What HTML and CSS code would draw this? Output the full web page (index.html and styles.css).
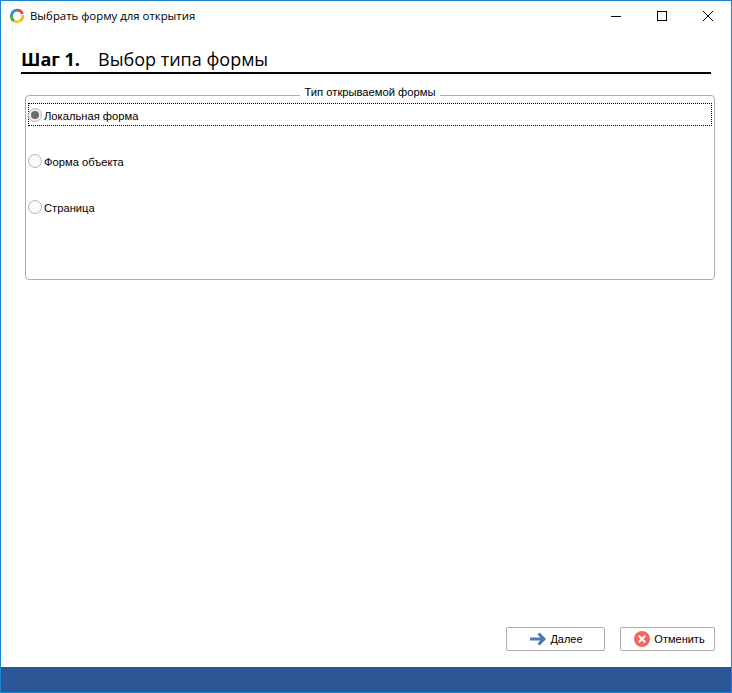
FILE: index.html
```html
<!DOCTYPE html>
<html lang="ru">
<head>
<meta charset="utf-8">
<title>Выбрать форму для открытия</title>
<link rel="stylesheet" href="styles.css">
</head>
<body>
<div class="window">
  <header class="titlebar">
    <svg class="app-icon" width="16" height="16" viewBox="0 0 16 16" fill="none" stroke-width="2.800">
      <path d="M8 2.200A5.800 5.800 0 0 1 13.500 6" stroke="#e5412f"/>
      <path d="M13.700 7.200A5.800 5.800 0 0 1 10.500 13.200" stroke="#f6b81d"/>
      <path d="M10 13.400A5.800 5.800 0 0 1 4.600 12.700" stroke="#f3c52c"/>
      <path d="M5 12.900A5.800 5.800 0 0 1 2.300 7.500" stroke="#4cae4f"/>
      <path d="M2.300 8A5.800 5.800 0 0 1 8 2.200" stroke="#2c8fd6"/>
    </svg>
    <span class="title">Выбрать форму для открытия</span>
    <div class="controls">
      <svg class="ctl" width="46" height="31" viewBox="0 0 46 31"><path d="M18 15.500h10" stroke="#000" fill="none"/></svg>
      <svg class="ctl" width="46" height="31" viewBox="0 0 46 31"><rect x="18.500" y="10.500" width="9" height="9" stroke="#000" fill="none"/></svg>
      <svg class="ctl" width="46" height="31" viewBox="0 0 46 31"><path d="M18 10l10 10M28 10L18 20" stroke="#000" fill="none"/></svg>
    </div>
  </header>
  <div class="step">
    <span class="step-num">Шаг 1.</span>
    <span class="step-name">Выбор типа формы</span>
  </div>
  <fieldset class="group">
    <legend class="legend">Тип открываемой формы</legend>
    <div class="option focused">
      <span class="radio checked"></span>
      <span class="label">Локальная форма</span>
    </div>
    <div class="option">
      <span class="radio"></span>
      <span class="label">Форма объекта</span>
    </div>
    <div class="option">
      <span class="radio"></span>
      <span class="label">Страница</span>
    </div>
  </fieldset>
  <div class="spacer"></div>
  <div class="actions">
    <button class="btn next" type="button">
      <svg width="18" height="16" viewBox="0 0 18 16" fill="none"><path d="M1 8h14M9.500 2.500L15 8l-5.500 5.500" stroke="#4a7ab5" stroke-width="3"/></svg>
      <span>Далее</span>
    </button>
    <button class="btn cancel" type="button">
      <svg width="16" height="16" viewBox="0 0 16 16"><circle cx="8" cy="8" r="8" fill="#f0695c"/><path d="M4.800 4.800l6.400 6.400M11.200 4.800l-6.400 6.400" stroke="#fff" stroke-width="2" fill="none"/></svg>
      <span>Отменить</span>
    </button>
  </div>
  <footer class="footer"></footer>
</div>
</body>
</html>
```
FILE: styles.css
```css
html, body {
  margin: 0;
  padding: 0;
  background: #fff;
}
.window {
  box-sizing: border-box;
  width: 732px;
  height: 693px;
  border: 1px solid #1883d7;
  display: flex;
  flex-direction: column;
  font-family: "Liberation Sans", Arial, sans-serif;
  color: #000;
  background: #fff;
  overflow: hidden;
}
.titlebar {
  display: flex;
  align-items: center;
  height: 30px;
  flex: none;
  padding-left: 8px;
}
.app-icon {
  flex: none;
}
.title {
  margin-left: 5px;
  padding-bottom: 2px;
  font-family: "Open Sans", sans-serif;
  font-size: 11.4px;
}
.controls {
  margin-left: auto;
  display: flex;
}
.ctl {
  display: block;
}
.step {
  flex: none;
  margin: 14px 20px 0;
  height: 29px;
  padding-top: 2px;
  box-sizing: border-box;
  border-bottom: 2px solid #000;
  display: flex;
  align-items: baseline;
  font-family: "Open Sans", sans-serif;
  font-size: 18px;
  line-height: 24px;
}
.step-num {
  font-weight: 700;
  width: 77px;
}
.group {
  flex: none;
  box-sizing: border-box;
  margin: 12px 16px 0 24px;
  width: 690px;
  height: 194px;
  padding: 0 2px;
  border: 1px solid #adadad;
  border-radius: 4px;
  min-width: 0;
}
.legend {
  margin: 0 auto;
  padding: 0 5px 6px;
  font-size: 11.2px;
  line-height: 13px;
  text-align: center;
}
.option {
  display: flex;
  align-items: center;
  box-sizing: border-box;
  height: 23px;
  margin-bottom: 23px;
  border: 1px dotted transparent;
  font-size: 11.2px;
}
.option:first-of-type {
  margin-top: -2px;
}
.option.focused {
  border-color: #000;
}
.radio {
  flex: none;
  box-sizing: border-box;
  width: 14px;
  height: 14px;
  margin-left: -1px;
  border: 1px solid #b5b5b5;
  border-radius: 50%;
  background: #fafafa;
  display: flex;
  align-items: center;
  justify-content: center;
}
.radio.checked {
  background: #f0f0f0;
}
.radio.checked::after {
  content: "";
  width: 8px;
  height: 8px;
  border-radius: 50%;
  background: #6b6b6b;
}
.label {
  margin-left: 2px;
  padding-top: 2px;
}
.spacer {
  flex: 1;
}
.actions {
  flex: none;
  display: flex;
  justify-content: flex-end;
  gap: 15px;
  padding-right: 16px;
  margin-bottom: 16px;
}
.btn {
  box-sizing: border-box;
  height: 24px;
  border: 1px solid #adadad;
  border-radius: 2px;
  background: #fff;
  display: flex;
  align-items: center;
  justify-content: center;
  gap: 4px;
  padding: 0;
  font-family: "Liberation Sans", Arial, sans-serif;
  font-size: 11px;
  color: #000;
}
.next {
  width: 99px;
  padding-left: 1px;
  gap: 3px;
}
.cancel {
  width: 95px;
  padding-left: 4px;
}
.footer {
  flex: none;
  height: 25px;
  background: #2b5797;
}
```
